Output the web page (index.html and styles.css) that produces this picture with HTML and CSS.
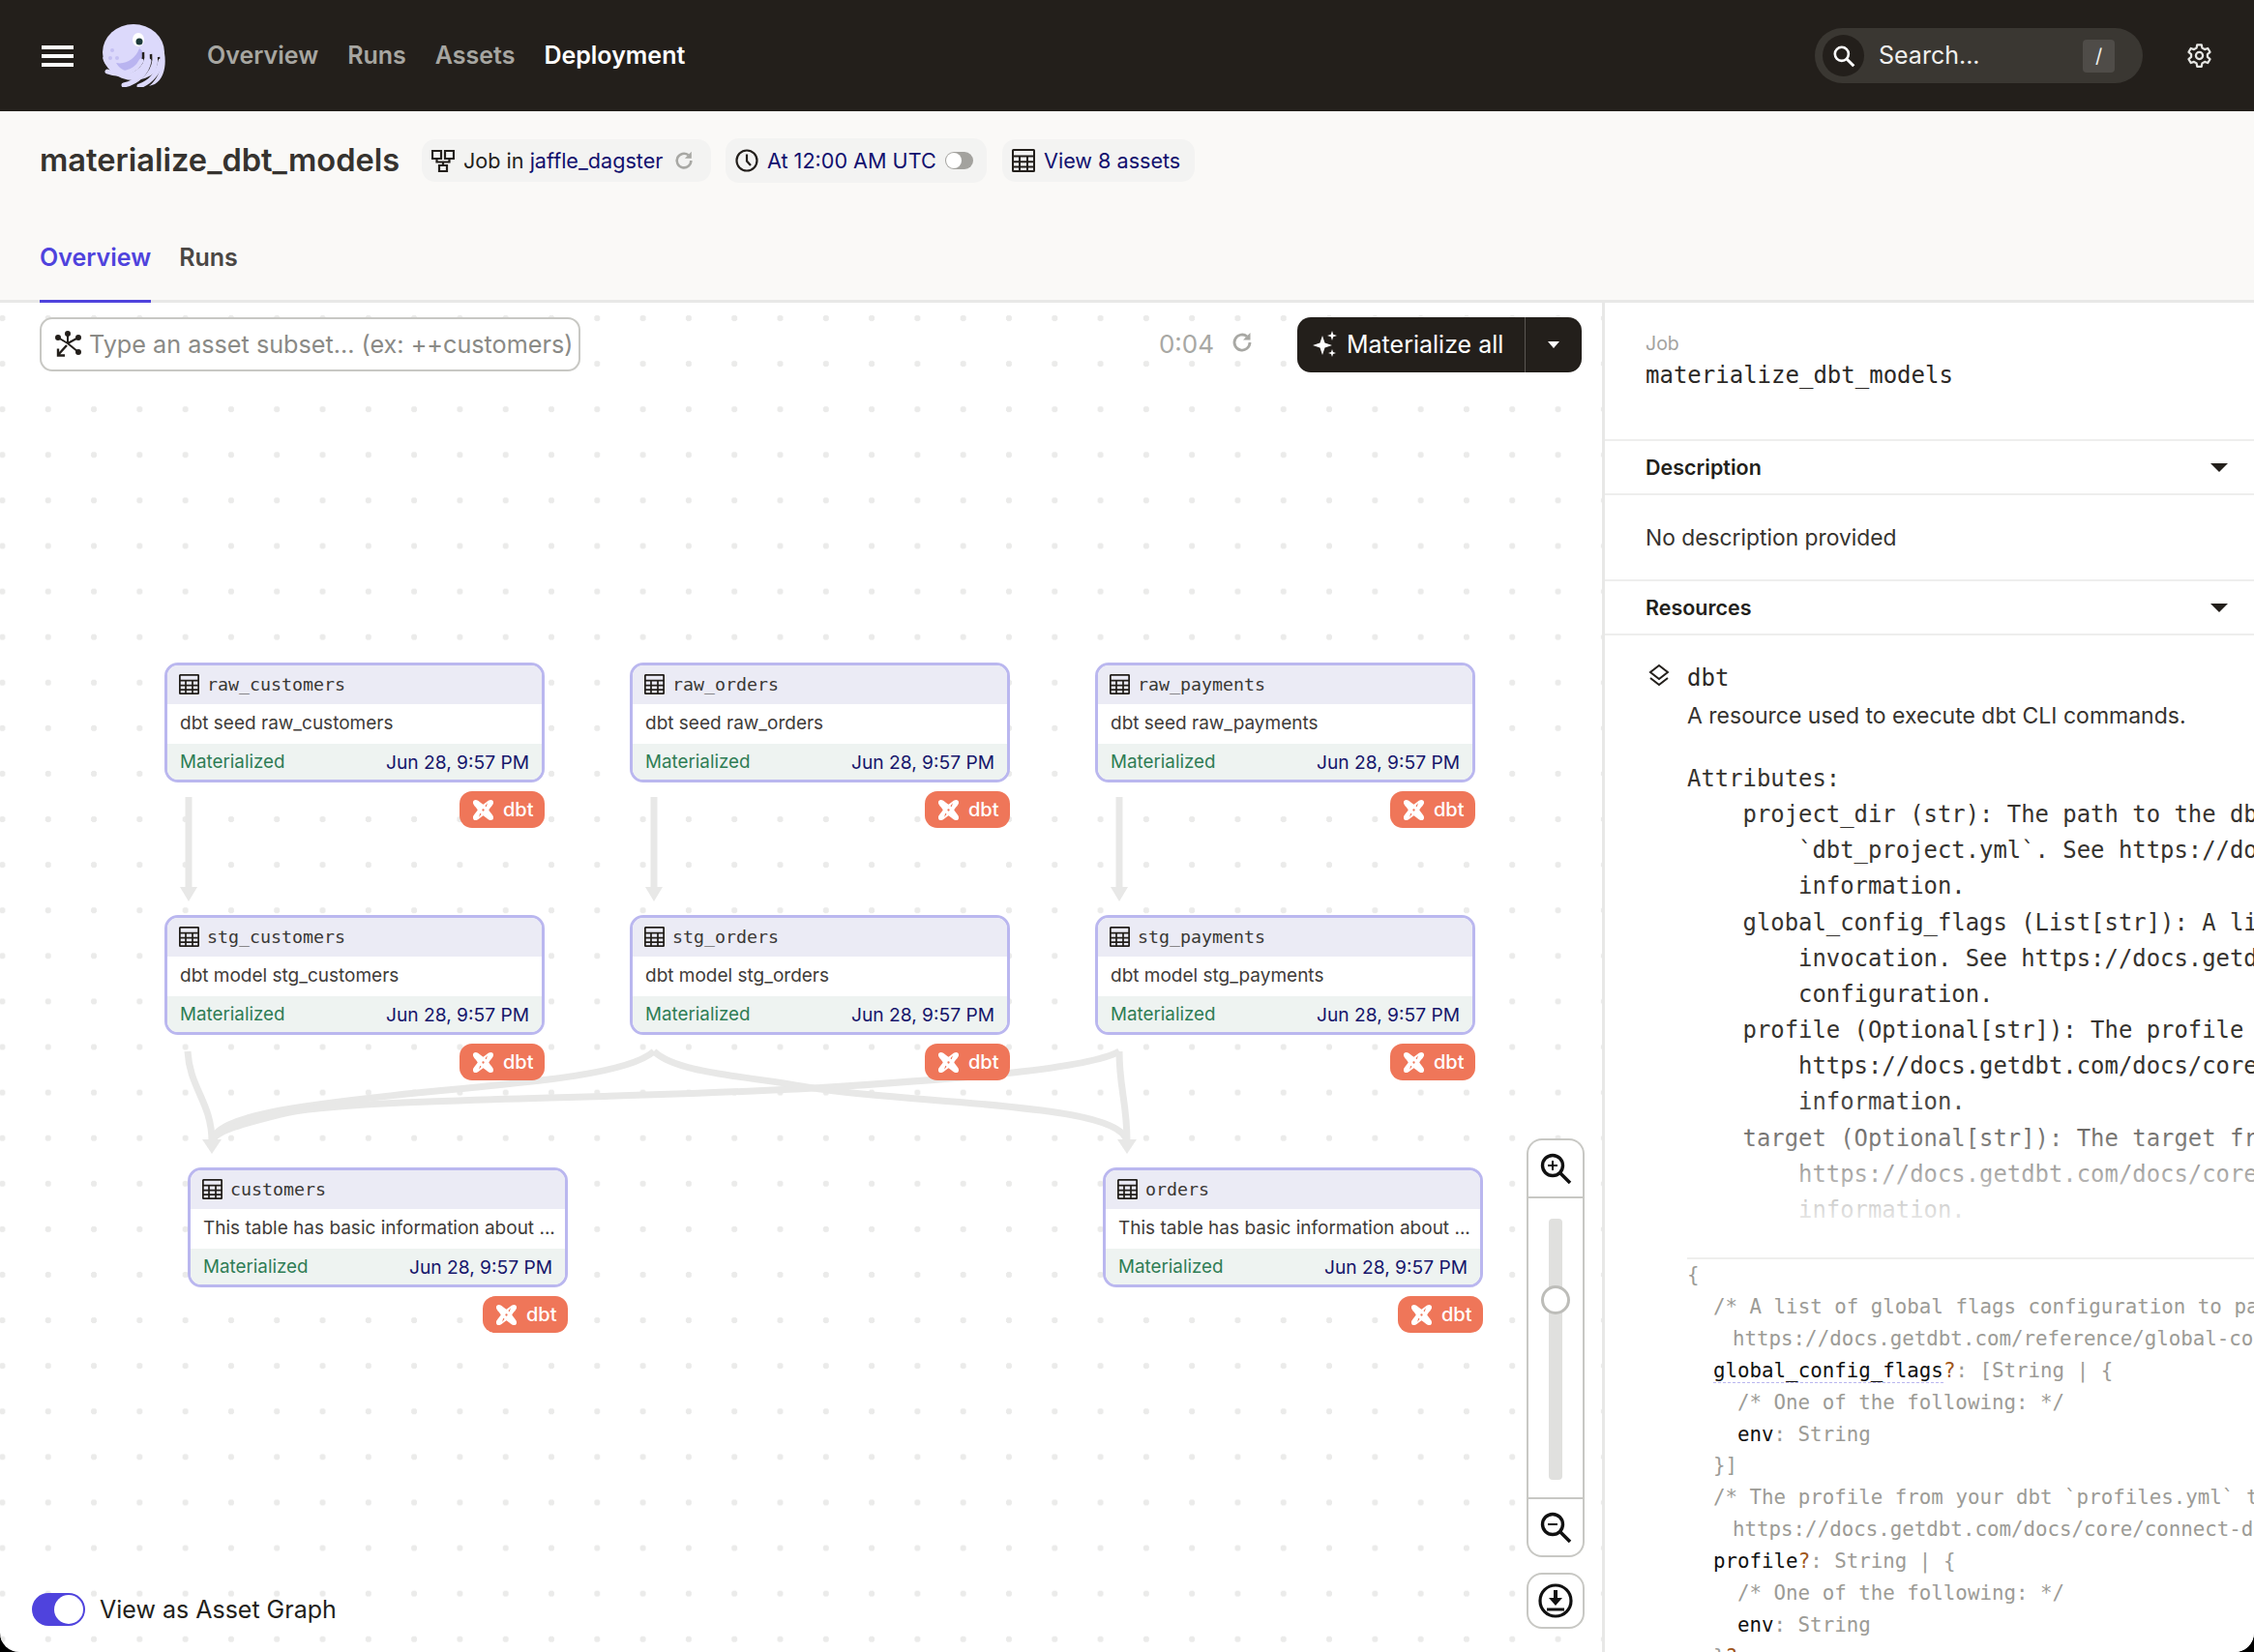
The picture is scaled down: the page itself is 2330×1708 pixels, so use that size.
FILE: index.html
```html
<!DOCTYPE html>
<html lang="en">
<head>
    <meta charset="UTF-8">
    <title>materialize_dbt_models</title>
    <link rel="stylesheet" href="styles.css">
</head>
<body>
    <svg class="defs" width="0" height="0">
        <symbol id="i-table" viewBox="0 0 24 24">
            <path d="M1.5 1h21a.5.5 0 0 1 .5.5v21a.5.5 0 0 1-.5.5h-21a.5.5 0 0 1-.5-.5v-21a.5.5 0 0 1 .5-.5z" fill="none" stroke="currentColor" stroke-width="2"/>
            <path d="M1 7.5h22M1 13.2h22M1 18.4h22M8 7.5V23M16 7.5V23" fill="none" stroke="currentColor" stroke-width="2"/>
        </symbol>
        <symbol id="i-dbt" viewBox="0 0 24 24">
            <path fill="#fff" d="M4 1C6.500 1 9 4.300 12 6C15 4.300 17.500 1 20 1C22 1 23 2 23 4C23 6.500 19.700 9 18 12C19.700 15 23 17.500 23 20C23 22 22 23 20 23C17.500 23 15 19.700 12 18C9 19.700 6.500 23 4 23C2 23 1 22 1 20C1 17.500 4.300 15 6 12C4.300 9 1 6.500 1 4C1 2 2 1 4 1Z"/>
            <path fill="#ef7659" d="M10.800 12a1.200 1.200 0 1 0 2.400 0a1.200 1.200 0 1 0-2.400 0zM16.500 4.500l-2.500 3 1.500 1zM7.500 19.500l2.500-3-1.500-1z"/>
        </symbol>
    </svg>

    <div class="app">
        <header class="topbar">
            <button class="menu-btn"><span></span><span></span><span></span></button>
            <svg class="logo" viewBox="0 0 65 65">
                <ellipse cx="32" cy="29" rx="32" ry="29" fill="#dcd9fb"/>
                <path d="M0 34C2 46 14 52 24 46C34 41 38 34 42 26C44 40 36 48 26 50" fill="#dcd9fb"/>
                <path d="M14 40C24 42 34 36 38 25C46 30 44 42 34 47C26 51 18 47 14 40Z" fill="#b9b4f0"/>
                <path d="M42 29C44 44 30 54 6 50" fill="none" stroke="#231f1b" stroke-width="2.500"/>
                <path d="M50 31C52 46 40 60 24 61" fill="none" stroke="#231f1b" stroke-width="2.500"/>
                <path d="M58 34C60 46 52 58 40 64" fill="none" stroke="#231f1b" stroke-width="2.500"/>
                <path d="M5 49C18 54 34 50 40 38M22 63C36 60 46 50 48 38M38 64C50 60 58 50 60 38" fill="none" stroke="#dcd9fb" stroke-width="5" stroke-linecap="round"/>
                <path d="M64 30C66 42 64 56 54 62L48 64C58 56 62 44 60 32Z" fill="#dcd9fb"/>
                <ellipse cx="37" cy="16" rx="6" ry="7" fill="#fff"/>
                <circle cx="38" cy="18" r="3.500" fill="#1d3a3a"/>
                <circle cx="10" cy="27" r="2" fill="#c4c0f2"/>
                <circle cx="15" cy="35" r="2" fill="#c4c0f2"/>
                <circle cx="8" cy="35" r="2" fill="#c4c0f2"/>
            </svg>
            <nav class="topnav">
                <a>Overview</a>
                <a>Runs</a>
                <a>Assets</a>
                <a class="active">Deployment</a>
            </nav>
            <div class="search">
                <span class="search-ico">
                    <svg viewBox="0 0 24 24" width="26" height="26"><circle cx="10" cy="10" r="6.500" fill="none" stroke="#fff" stroke-width="2.400"/><path d="M15 15l6.500 6.500" stroke="#fff" stroke-width="2.800"/></svg>
                </span>
                <span class="search-text">Search...</span>
                <span class="slash">/</span>
            </div>
            <svg class="gear" viewBox="0 0 24 24">
                <path d="M10 2h4l.6 3 2.300 1.300 2.900-1 2 3.400-2.300 2 0 2.600 2.300 2-2 3.400-2.900-1-2.300 1.300-.6 3h-4l-.6-3-2.300-1.300-2.900 1-2-3.400 2.300-2 0-2.600-2.300-2 2-3.400 2.900 1 2.300-1.300z" fill="none" stroke="#e6e6e3" stroke-width="2" stroke-linejoin="round"/>
                <circle cx="12" cy="12" r="3.200" fill="none" stroke="#e6e6e3" stroke-width="2"/>
            </svg>
        </header>

        <section class="page-head">
            <div class="title-row">
                <h1>materialize_dbt_models</h1>
                <div class="pill pill-job">
                    <svg class="pill-ico" viewBox="0 0 24 24"><path d="M1 2h9v8H1zM14 2h9v8h-9zM8 17h8v6H8z" fill="none" stroke="#231f1b" stroke-width="2.200"/><path d="M5.500 10v3.500h13V10M12 13.500V17" fill="none" stroke="#231f1b" stroke-width="2.200"/></svg>
                    <span>Job in <a>jaffle_dagster</a></span>
                    <svg class="pill-reload" viewBox="0 0 24 24"><path d="M20 12a8 8 0 1 1-3-6.200" fill="none" stroke="#a8a8a4" stroke-width="2.800"/><path d="M20.500 2v7.500H13z" fill="#a8a8a4"/></svg>
                </div>
                <div class="pill pill-sched">
                    <svg class="pill-ico" viewBox="0 0 24 24"><circle cx="12" cy="12" r="10.500" fill="none" stroke="#231f1b" stroke-width="2.200"/><path d="M12 5.500V12.500l4 4.500" fill="none" stroke="#231f1b" stroke-width="2.200"/></svg>
                    <a>At 12:00 AM UTC</a>
                    <span class="mini-toggle"><i></i></span>
                </div>
                <div class="pill pill-assets">
                    <svg class="pill-ico"><use href="#i-table"/></svg>
                    <a>View 8 assets</a>
                </div>
            </div>
            <div class="tabs">
                <a class="tab active">Overview</a>
                <a class="tab">Runs</a>
            </div>
        </section>

        <main class="content">
            <div class="graph">
                <svg class="edges" viewBox="0 0 1656 1395" width="1656" height="1395">
                    <g fill="none" stroke="#e8e8e7" stroke-width="7" transform="translate(0 -313)">
                        <path d="M195 824V918"/>
                        <path d="M676 824V918"/>
                        <path d="M1157 824V918"/>
                        <path d="M194 1087C196 1125 219 1140 219 1180"/>
                        <path d="M676 1087C650 1110 560 1118 430 1130C340 1140 219 1150 219 1182"/>
                        <path d="M1157 1087C1125 1105 1000 1115 841 1125C600 1138 360 1135 290 1152C250 1162 219 1170 219 1182"/>
                        <path d="M676 1087C700 1110 770 1112 841 1125C950 1142 1165 1140 1165 1182"/>
                        <path d="M1157 1087C1157 1125 1165 1140 1165 1180"/>
                    </g>
                    <g fill="#e8e8e7" transform="translate(0 -313)">
                        <path d="M186 917h18l-9 15z"/>
                        <path d="M667 917h18l-9 15z"/>
                        <path d="M1148 917h18l-9 15z"/>
                        <path d="M209 1178h20l-10 15z"/>
                        <path d="M1155 1178h20l-10 15z"/>
                    </g>
                </svg>

                <div class="graph-toolbar">
                    <div class="filter">
                        <svg viewBox="0 0 27 27" width="27" height="27">
                            <g stroke="#231f1b" stroke-width="2" fill="#231f1b">
                                <path d="M13 13L13 3M13 13L3 7M13 13L24 7M13 13L24 22" fill="none"/>
                                <circle cx="13" cy="3" r="2"/><circle cx="3" cy="7" r="2"/><circle cx="24" cy="7" r="2"/><circle cx="24" cy="22" r="2"/>
                                <path d="M12 15L3 25M3 18.500V25.500H10" fill="none" stroke-width="2.400"/>
                            </g>
                        </svg>
                        <span>Type an asset subset... (ex: ++customers)</span>
                    </div>
                    <span class="timer">0:04</span>
                    <svg class="timer-ico" viewBox="0 0 24 24"><path d="M20 12a8 8 0 1 1-3-6.200" fill="none" stroke="#a8a8a4" stroke-width="2.800"/><path d="M20.500 2v7.500H13z" fill="#a8a8a4"/></svg>
                    <div class="mat-btn">
                        <div class="mat-main">
                            <svg viewBox="0 0 26 28" width="26" height="28" fill="#fff"><path d="M10 5l2.500 7.500L20 15l-7.500 2.500L10 25l-2.500-7.500L0 15l7.500-2.500zM20 0l1.200 3.800L25 5l-3.800 1.200L20 10l-1.200-3.800L15 5l3.800-1.200zM20 19l1 3 3 1-3 1-1 3-1-3-3-1 3-1z"/></svg>
                            <span>Materialize all</span>
                        </div>
                        <div class="mat-caret"><i></i></div>
                    </div>
                </div>

                <div class="node n-c1 n-r1">
                    <div class="node-box">
                        <div class="node-name"><svg><use href="#i-table"/></svg>raw_customers</div>
                        <div class="node-desc">dbt seed raw_customers</div>
                        <div class="node-stat"><span class="ok">Materialized</span><span class="when">Jun 28, 9:57 PM</span></div>
                    </div>
                    <div class="tag"><svg><use href="#i-dbt"/></svg>dbt</div>
                </div>
                <div class="node n-c2 n-r1">
                    <div class="node-box">
                        <div class="node-name"><svg><use href="#i-table"/></svg>raw_orders</div>
                        <div class="node-desc">dbt seed raw_orders</div>
                        <div class="node-stat"><span class="ok">Materialized</span><span class="when">Jun 28, 9:57 PM</span></div>
                    </div>
                    <div class="tag"><svg><use href="#i-dbt"/></svg>dbt</div>
                </div>
                <div class="node n-c3 n-r1">
                    <div class="node-box">
                        <div class="node-name"><svg><use href="#i-table"/></svg>raw_payments</div>
                        <div class="node-desc">dbt seed raw_payments</div>
                        <div class="node-stat"><span class="ok">Materialized</span><span class="when">Jun 28, 9:57 PM</span></div>
                    </div>
                    <div class="tag"><svg><use href="#i-dbt"/></svg>dbt</div>
                </div>
                <div class="node n-c1 n-r2">
                    <div class="node-box">
                        <div class="node-name"><svg><use href="#i-table"/></svg>stg_customers</div>
                        <div class="node-desc">dbt model stg_customers</div>
                        <div class="node-stat"><span class="ok">Materialized</span><span class="when">Jun 28, 9:57 PM</span></div>
                    </div>
                    <div class="tag"><svg><use href="#i-dbt"/></svg>dbt</div>
                </div>
                <div class="node n-c2 n-r2">
                    <div class="node-box">
                        <div class="node-name"><svg><use href="#i-table"/></svg>stg_orders</div>
                        <div class="node-desc">dbt model stg_orders</div>
                        <div class="node-stat"><span class="ok">Materialized</span><span class="when">Jun 28, 9:57 PM</span></div>
                    </div>
                    <div class="tag"><svg><use href="#i-dbt"/></svg>dbt</div>
                </div>
                <div class="node n-c3 n-r2">
                    <div class="node-box">
                        <div class="node-name"><svg><use href="#i-table"/></svg>stg_payments</div>
                        <div class="node-desc">dbt model stg_payments</div>
                        <div class="node-stat"><span class="ok">Materialized</span><span class="when">Jun 28, 9:57 PM</span></div>
                    </div>
                    <div class="tag"><svg><use href="#i-dbt"/></svg>dbt</div>
                </div>
                <div class="node n-customers n-r3">
                    <div class="node-box">
                        <div class="node-name"><svg><use href="#i-table"/></svg>customers</div>
                        <div class="node-desc">This table has basic information about ...</div>
                        <div class="node-stat"><span class="ok">Materialized</span><span class="when">Jun 28, 9:57 PM</span></div>
                    </div>
                    <div class="tag"><svg><use href="#i-dbt"/></svg>dbt</div>
                </div>
                <div class="node n-orders n-r3">
                    <div class="node-box">
                        <div class="node-name"><svg><use href="#i-table"/></svg>orders</div>
                        <div class="node-desc">This table has basic information about ...</div>
                        <div class="node-stat"><span class="ok">Materialized</span><span class="when">Jun 28, 9:57 PM</span></div>
                    </div>
                    <div class="tag"><svg><use href="#i-dbt"/></svg>dbt</div>
                </div>

                <div class="zoom-ctl">
                    <div class="zoom-btn zoom-top">
                        <svg viewBox="0 0 34 34" width="34" height="34"><circle cx="14" cy="14" r="10.500" fill="none" stroke="#111" stroke-width="3.400"/><path d="M14 9v10M9 14h10" stroke="#111" stroke-width="2"/><path d="M22 22l10 10" stroke="#111" stroke-width="3.600"/></svg>
                    </div>
                    <div class="zoom-slider"><div class="zoom-track"><i></i></div></div>
                    <div class="zoom-btn zoom-bottom">
                        <svg viewBox="0 0 34 34" width="34" height="34"><circle cx="14" cy="14" r="10.500" fill="none" stroke="#111" stroke-width="3.400"/><path d="M9 14h10" stroke="#111" stroke-width="2"/><path d="M22 22l10 10" stroke="#111" stroke-width="3.600"/></svg>
                    </div>
                </div>
                <div class="zoom-btn zoom-dl">
                    <svg viewBox="0 0 36 36" width="36" height="36"><circle cx="18" cy="18" r="16" fill="none" stroke="#111" stroke-width="3.200"/><path d="M18 7v12" stroke="#111" stroke-width="4"/><path d="M11 15h14l-7 8z" fill="#111"/><path d="M9 27h18" stroke="#111" stroke-width="3"/></svg>
                </div>

                <div class="graph-switch">
                    <span class="switch"><i></i></span>
                    <span>View as Asset Graph</span>
                </div>
            </div>

            <aside class="panel">
                <div class="panel-head">
                    <div class="panel-label">Job</div>
                    <div class="panel-name">materialize_dbt_models</div>
                </div>
                <div class="sec-head">Description<i class="caret"></i></div>
                <div class="sec-body">No description provided</div>
                <div class="sec-head">Resources<i class="caret"></i></div>
                <div class="resource">
                    <svg class="res-ico" viewBox="0 0 24 24"><path d="M12 2L21 9L12 16L3 9Z" fill="none" stroke="#231f1b" stroke-width="2"/><path d="M3 15L12 22L21 15" fill="none" stroke="#231f1b" stroke-width="2"/></svg>
                    <div class="res-main">
                        <div class="res-name">dbt</div>
                        <div class="res-sum">A resource used to execute dbt CLI commands.</div>
                        <div class="res-doc">
<pre>Attributes:
    project_dir (str): The path to the dbt project directory. This directory should contain a
        `dbt_project.yml`. See https://docs.getdbt.com/reference/dbt_project.yml for more
        information.
    global_config_flags (List[str]): A list of global flags configuration to pass to the dbt CLI
        invocation. See https://docs.getdbt.com/reference/global-configs for a full list of
        configuration.
    profile (Optional[str]): The profile from your dbt `profiles.yml` to use for execution. See
        https://docs.getdbt.com/docs/core/connect-data-platform/connection-profiles for more
        information.
    target (Optional[str]): The target from your dbt `profiles.yml` to use for execution. See
        https://docs.getdbt.com/docs/core/connect-data-platform/connection-profiles for more
        information.</pre>
                        </div>
                        <div class="res-config">
                            <div class="cl">{</div>
                            <div class="cl in-1">/* A list of global flags configuration to pass to the dbt CLI invocation.</div>
                            <div class="cl in-c">https://docs.getdbt.com/reference/global-configs */</div>
                            <div class="cl in-1"><span class="key dashed">global_config_flags</span><span class="opt">?</span>: [String | {</div>
                            <div class="cl in-2">/* One of the following: */</div>
                            <div class="cl in-2"><span class="key">env</span>: String</div>
                            <div class="cl in-1">}]</div>
                            <div class="cl in-1">/* The profile from your dbt `profiles.yml` to use for execution.</div>
                            <div class="cl in-c">https://docs.getdbt.com/docs/core/connect-data-platform */</div>
                            <div class="cl in-1"><span class="key">profile</span><span class="opt">?</span>: String | {</div>
                            <div class="cl in-2">/* One of the following: */</div>
                            <div class="cl in-2"><span class="key">env</span>: String</div>
                            <div class="cl in-1">}<span class="opt">?</span></div>
                        </div>
                    </div>
                </div>
            </aside>
        </main>
    </div>
</body>
</html>
```

FILE: styles.css
```css
* {
    box-sizing: border-box;
}

html, body {
    margin: 0;
    height: 100%;
    overflow: hidden;
    background: #000;
}

body {
    font-family: "Inter", "Liberation Sans", sans-serif;
    color: #231f1b;
}

svg {
    flex: none;
}

.defs {
    position: absolute;
}

.app {
    width: 2330px;
    height: 1708px;
    display: flex;
    flex-direction: column;
    background: #fff;
    border-radius: 0 0 20px 20px;
    overflow: hidden;
}

/* -- Top bar -- */

.topbar {
    flex: 0 0 115px;
    display: flex;
    align-items: center;
    background: #231f1b;
    padding-left: 43px;
}

.menu-btn {
    width: 33px;
    height: 22px;
    padding: 0;
    border: 0;
    background: none;
    display: flex;
    flex-direction: column;
    justify-content: space-between;
}

.menu-btn span {
    display: block;
    height: 4px;
    background: #fff;
}

.logo {
    width: 65px;
    height: 65px;
    margin-left: 30px;
}

.topnav {
    display: flex;
    gap: 30px;
    margin: 0 0 2px 43px;
    font-size: 25px;
    font-weight: 600;
    color: #a7a6a1;
}

.topnav .active {
    color: #fff;
}

.search {
    width: 339px;
    height: 57px;
    margin-left: auto;
    display: flex;
    align-items: center;
    padding-left: 8px;
    border-radius: 29px;
    background: #3a3732;
    color: #f0f0ee;
    font-size: 25px;
}

.search-ico {
    width: 43px;
    height: 43px;
    border-radius: 50%;
    background: #231f1b;
    display: flex;
    align-items: center;
    justify-content: center;
}

.search-text {
    margin-left: 15px;
    margin-bottom: 2px;
}

.slash {
    width: 33px;
    height: 34px;
    margin-left: auto;
    margin-right: 29px;
    border-radius: 4px;
    background: #4f4c48;
    font-size: 20px;
    line-height: 34px;
    text-align: center;
}

.gear {
    width: 27px;
    height: 27px;
    margin-left: 45px;
    margin-right: 43px;
}

/* -- Page head -- */

.page-head {
    flex: 0 0 198px;
    background: #faf9f7;
    border-bottom: 3px solid #e8e8e7;
    padding: 28px 0 0 41px;
    display: flex;
    flex-direction: column;
    justify-content: space-between;
}

.title-row {
    display: flex;
    align-items: center;
    height: 46px;
}

h1 {
    margin: 0 23px 2px 0;
    width: 372px;
    font-size: 32.600px;
    font-weight: 600;
    color: #36332f;
    white-space: nowrap;
}

.pill {
    height: 44px;
    display: flex;
    align-items: center;
    border-radius: 14px;
    background: #f3f3f2;
    padding: 0 10px;
    font-size: 21.600px;
    white-space: nowrap;
}

.pill a {
    color: #12106e;
}

.pill-ico {
    width: 24px;
    height: 24px;
    margin-right: 9px;
    color: #231f1b;
}

.pill-reload {
    width: 22px;
    height: 22px;
    margin-left: 11px;
}

.pill-job {
    width: 299px;
}

.pill-sched {
    width: 270px;
    height: 46px;
    margin-left: 15px;
}

.pill-assets {
    width: 199px;
    margin-left: 16px;
}

.mini-toggle {
    width: 29px;
    height: 18px;
    margin-left: 9px;
    border-radius: 9px;
    background: #a3a29e;
    display: block;
    position: relative;
}

.mini-toggle i {
    position: absolute;
    left: 1px;
    top: 1px;
    width: 16px;
    height: 16px;
    border-radius: 50%;
    background: #fff;
}

.tabs {
    display: flex;
    gap: 29px;
    margin-bottom: -3px;
}

.tab {
    height: 64px;
    font-size: 25px;
    font-weight: 600;
    color: #4a4744;
    padding-top: 2px;
}

.tab.active {
    color: #4f43dd;
    border-bottom: 3px solid #4f43dd;
}

/* -- Graph -- */

.content {
    flex: 1;
    display: flex;
    min-height: 0;
}

.graph {
    position: relative;
    flex: 0 0 1656px;
    overflow: hidden;
    background-image: radial-gradient(circle, #ebebea 3px, transparent 3.500px);
    background-size: 47.300px 47.100px;
    background-position: 26.100px -7.550px;
}

.edges {
    position: absolute;
    left: 0;
    top: 0;
}

.graph-toolbar {
    position: absolute;
    left: 41px;
    top: 15px;
    width: 1594px;
    display: flex;
    align-items: flex-start;
}

.filter {
    width: 559px;
    height: 56px;
    display: flex;
    align-items: center;
    gap: 8px;
    padding: 0 0 1px 14px;
    border: 2px solid #c8c8c4;
    border-radius: 13px;
    background: #fff;
    font-size: 25.200px;
    color: #8a8a86;
    white-space: nowrap;
}

.timer {
    margin-left: auto;
    margin-top: 12px;
    font-size: 26px;
    color: #a8a8a4;
}

.timer-ico {
    width: 24px;
    height: 24px;
    margin-left: 17px;
    margin-top: 14px;
}

.mat-btn {
    width: 294px;
    height: 57px;
    margin-left: 45px;
    display: flex;
    border-radius: 14px;
    background: #231f1b;
    color: #fff;
    font-size: 25px;
}

.mat-main {
    flex: 1;
    display: flex;
    align-items: center;
    gap: 9px;
    padding: 0 0 1px 16px;
    border-right: 1px solid #5a5752;
}

.mat-caret {
    flex: 0 0 58px;
    display: flex;
    align-items: center;
    justify-content: center;
}

.mat-caret i, .caret {
    display: block;
    width: 0;
    height: 0;
    border-style: solid;
    border-color: #fff transparent transparent;
    border-width: 7px 6px 0;
}

/* -- Nodes -- */

.node {
    position: absolute;
    width: 393px;
}

.n-c1 { left: 170px; }
.n-c2 { left: 651px; }
.n-c3 { left: 1132px; }
.n-customers { left: 194px; }
.n-orders { left: 1140px; }

.n-r1 { top: 372px; }
.n-r2 { top: 633px; }
.n-r3 { top: 894px; }

.node-box {
    height: 124px;
    border: 3px solid #bab7ef;
    border-radius: 14px;
    overflow: hidden;
    background: #fff;
}

.node-name {
    height: 40px;
    display: flex;
    align-items: center;
    padding: 0 0 2px 12px;
    background: #ebebf5;
    font-family: "DejaVu Sans Mono", monospace;
    font-size: 18.300px;
    color: #3a3835;
}

.node-name svg {
    width: 21px;
    height: 21px;
    margin-right: 8px;
    color: #231f1b;
}

.node-desc {
    height: 41px;
    line-height: 39px;
    padding: 0 13px;
    font-size: 19px;
    color: #3f3c39;
    white-space: nowrap;
    overflow: hidden;
}

.node-stat {
    height: 37px;
    display: flex;
    align-items: center;
    justify-content: space-between;
    padding: 0 13px;
    background: #eef3f1;
    font-size: 19.200px;
}

.ok {
    font-size: 18.800px;
    color: #2f7d55;
}

.when {
    color: #16166b;
}

.tag {
    width: 88px;
    height: 38px;
    margin: 9px 0 0 auto;
    display: flex;
    align-items: center;
    gap: 9px;
    padding-left: 13px;
    border-radius: 13px;
    background: #ef7659;
    color: #fff;
    font-size: 20px;
    font-weight: 500;
}

.tag svg {
    width: 23px;
    height: 23px;
}

/* -- Zoom controls -- */

.zoom-ctl {
    position: absolute;
    left: 1578px;
    top: 864px;
    width: 60px;
}

.zoom-btn {
    height: 60px;
    display: flex;
    align-items: center;
    justify-content: center;
    background: #fff;
    border: 2px solid #c8c8c4;
}

.zoom-top {
    border-bottom: 0;
    border-radius: 16px 16px 0 0;
}

.zoom-bottom {
    border-top: 0;
    border-radius: 0 0 16px 16px;
}

.zoom-slider {
    height: 313px;
    padding-top: 21px;
    background: #fff;
    border: 2px solid #c8c8c4;
    display: flex;
    justify-content: center;
}

.zoom-track {
    position: relative;
    width: 14px;
    height: 270px;
    border-radius: 4px;
    background: #e0e0de;
}

.zoom-track i {
    position: absolute;
    left: -8px;
    top: 69px;
    width: 30px;
    height: 30px;
    border-radius: 50%;
    background: #fff;
    border: 3px solid #bdbdb9;
}

.zoom-dl {
    position: absolute;
    left: 1578px;
    top: 1313px;
    width: 60px;
    height: 58px;
    border-radius: 16px;
}

.graph-switch {
    position: absolute;
    left: 33px;
    top: 1334px;
    display: flex;
    align-items: center;
    gap: 15px;
    font-size: 25px;
}

.switch {
    position: relative;
    display: block;
    width: 55px;
    height: 34px;
    border-radius: 17px;
    background: #4f43dd;
}

.switch i {
    position: absolute;
    right: 2px;
    top: 2px;
    width: 30px;
    height: 30px;
    border-radius: 50%;
    background: #fff;
}

/* -- Right panel -- */

.panel {
    flex: 1;
    min-width: 0;
    overflow: hidden;
    background: #fff;
    border-left: 3px solid #e8e8e7;
}

.panel-head {
    height: 141px;
    padding: 30px 0 0 42px;
}

.panel-label {
    font-size: 19.500px;
    line-height: 24px;
    color: #a3a39f;
}

.panel-name {
    margin-top: 5px;
    font-family: "DejaVu Sans Mono", monospace;
    font-size: 24px;
    line-height: 32px;
    color: #2c2926;
}

.sec-head {
    height: 58px;
    display: flex;
    align-items: center;
    justify-content: space-between;
    padding: 0 27px 0 42px;
    border-top: 2px solid #eeeeed;
    border-bottom: 2px solid #eeeeed;
    font-size: 21.500px;
    font-weight: 600;
    color: #231f1b;
}

.caret {
    border-color: #231f1b transparent transparent;
    border-width: 9px 9px 0;
}

.sec-body {
    height: 87px;
    display: flex;
    align-items: center;
    padding-left: 42px;
    font-size: 22.800px;
    color: #36332f;
}

.resource {
    display: flex;
    padding: 28px 0 0 44px;
}

.res-ico {
    flex: 0 0 24px;
    width: 24px;
    height: 24px;
    margin: 1px 0 0 0;
}

.res-main {
    min-width: 0;
    margin-left: 17px;
}

.res-name {
    font-family: "DejaVu Sans Mono", monospace;
    font-size: 24px;
    line-height: 32px;
    color: #2c2926;
}

.res-sum {
    margin-top: 7px;
    font-size: 23px;
    line-height: 32px;
    color: #36332f;
}

.res-doc {
    position: relative;
    height: 513px;
    margin-top: 31px;
    overflow: hidden;
}

.res-doc::after {
    content: "";
    position: absolute;
    left: 0;
    right: 0;
    bottom: 0;
    height: 175px;
    background: linear-gradient(to bottom, rgba(255, 255, 255, 0), #fff 88%);
}

.res-doc pre {
    margin: 0;
    font-family: "DejaVu Sans Mono", monospace;
    font-size: 23.900px;
    line-height: 37.150px;
    color: #36332f;
}

.res-config {
    border-top: 2px solid #eeeeed;
    font-family: "DejaVu Sans Mono", monospace;
    font-size: 20.800px;
    line-height: 32.900px;
    color: #9c9b96;
}

.cl {
    white-space: pre;
}

.cl.in-1 { padding-left: 27px; }
.cl.in-c { padding-left: 47px; }
.cl.in-2 { padding-left: 52px; }

.key {
    color: #111;
}

.dashed {
    border-bottom: 1px dashed #bab7ef;
}

.opt {
    color: #a0561a;
}
```
